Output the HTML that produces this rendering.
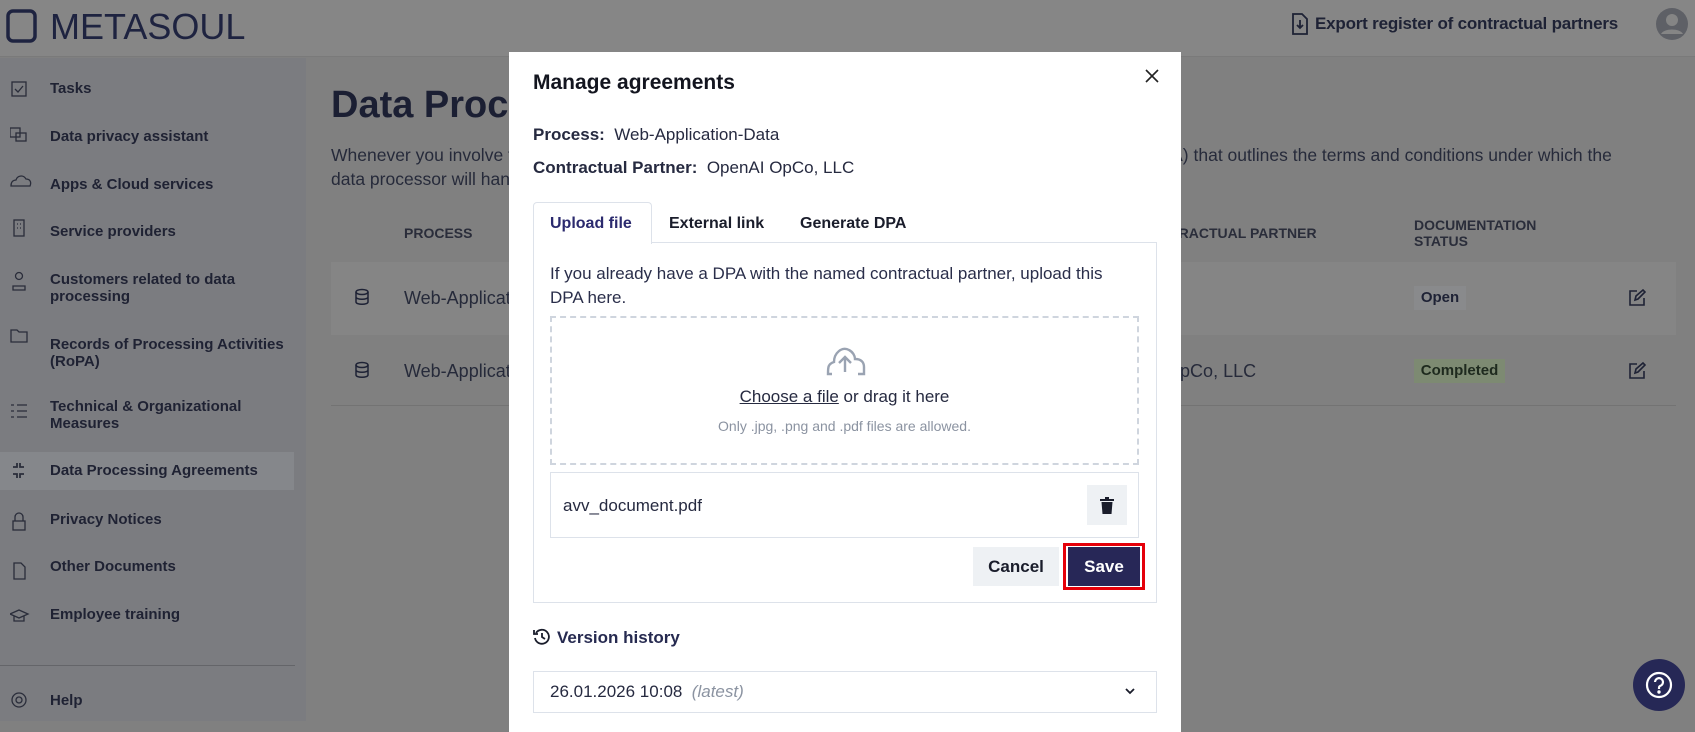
<!DOCTYPE html>
<html><head><meta charset="utf-8"><style>
*{box-sizing:border-box;margin:0;padding:0}
body{width:1695px;height:721px;overflow:hidden;position:relative;font-family:"Liberation Sans",sans-serif;background:#808080;color:#1e2235}
.abs{position:absolute}
.hdr{left:0;top:0;width:1695px;height:57px;background:#868686;border-bottom:1px solid #7a7a7a}
.side{left:0;top:58px;width:306px;height:663px;background:#7b7c80}
.nav{position:absolute;left:50px;font-size:15px;font-weight:bold;color:#1f2233;line-height:17px}
.m{position:absolute;font-family:"Liberation Sans",sans-serif}
.modal{left:509px;top:52px;width:672px;height:680px;background:#fff}
</style></head><body>
<div class="abs hdr"></div>
<svg class="abs" style="left:6px;top:9px" width="32" height="34"><rect x="2" y="2" width="27" height="30" rx="5" fill="none" stroke="#1e2340" stroke-width="3.5"/></svg>
<div class="abs" style="left:50px;top:6px;font-size:36px;color:#1e2340">METASOUL</div>
<svg class="abs" style="left:1291px;top:13px" width="18" height="22"><path d="M2 1h9l5 5v15H2z" fill="none" stroke="#1e2235" stroke-width="1.8"/><path d="M9 7v8M6 12l3 3 3-3" fill="none" stroke="#1e2235" stroke-width="1.8"/></svg>
<div class="abs" style="left:1315px;top:14px;font-size:17px;font-weight:bold;color:#1e2235;letter-spacing:-0.2px">Export register of contractual partners</div>
<svg class="abs" style="left:1654px;top:6px" width="36" height="36"><circle cx="18" cy="18" r="16" fill="#5e6066"/><circle cx="18" cy="14" r="6" fill="#858585"/><path d="M7 28c3-6 19-6 22 0" fill="#858585"/></svg>
<div class="abs side"></div>
<div class="abs" style="left:0;top:452px;width:294px;height:38px;background:#85878b"></div>
<div class="abs" style="left:0;top:665px;width:295px;height:1px;background:#646569"></div>
<svg class="abs" style="left:10px;top:78px" width="24" height="640" fill="none" stroke="#2a2d3a" stroke-width="1.3">
<rect x="2" y="4" width="14" height="14"/><path d="M5 11l3 3 5-6"/>
<rect x="0" y="50" width="10" height="9"/><rect x="6" y="55" width="10" height="8"/>
<path d="M1 108c0-5 3-6 5-6 1-4 7-6 10-1 3 0 6 2 4 7z"/>
<rect x="4" y="142" width="10" height="16"/><path d="M7 146h1M10 146h1M7 150h1M10 150h1"/>
<circle cx="9" cy="198" r="3.5"/><path d="M3 212v-4h12v4z"/>
<path d="M1 264v-12h6l2 2h8v10z"/>
<path d="M1 327h3M7 327h10M1 333h3M7 333h10M1 339h3M7 339h10"/>
<path d="M3 389h4v-4M14 389h-4v-4M3 396h4v4M14 396h-4v4" stroke-width="1.8"/>
<rect x="3" y="443" width="12" height="9"/><path d="M5 443v-4a4 4 0 0 1 8 0v4"/>
<path d="M4 485h7l4 4v12H4z"/>
<path d="M0 536l9-4 9 4-9 4zM4 538v5h10v-5"/>
<circle cx="9" cy="622" r="7"/><circle cx="9" cy="622" r="3"/>
</svg>
<div class="nav" style="top:80px">Tasks</div>
<div class="nav" style="top:128px">Data privacy assistant</div>
<div class="nav" style="top:176px">Apps &amp; Cloud services</div>
<div class="nav" style="top:223px">Service providers</div>
<div class="nav" style="top:271px">Customers related to data<br>processing</div>
<div class="nav" style="top:336px">Records of Processing Activities<br>(RoPA)</div>
<div class="nav" style="top:398px">Technical &amp; Organizational<br>Measures</div>
<div class="nav" style="top:462px">Data Processing Agreements</div>
<div class="nav" style="top:511px">Privacy Notices</div>
<div class="nav" style="top:558px">Other Documents</div>
<div class="nav" style="top:606px">Employee training</div>
<div class="nav" style="top:692px">Help</div>

<div class="abs" style="left:331px;top:84px;font-size:38px;font-weight:bold;color:#1b1f33">Data Processing Agreements</div>
<div class="abs" style="left:331px;top:143px;font-size:17.5px;line-height:24px;color:#262a3a;width:1300px">Whenever you involve third parties in processing personal data, you need a Data Processing Agreement (DPA) that outlines the terms and conditions under which the data processor will handle the personal data. This section supports you in managing these DPAs.</div>
<div class="abs" style="left:404px;top:225px;font-size:14px;font-weight:bold;color:#2a2d3a">PROCESS</div>
<div class="abs" style="left:1139px;top:225px;font-size:14px;font-weight:bold;color:#2a2d3a">CONTRACTUAL PARTNER</div>
<div class="abs" style="left:1414px;top:217px;font-size:14px;font-weight:bold;color:#2a2d3a;line-height:16px">DOCUMENTATION<br>STATUS</div>
<div class="abs" style="left:331px;top:262px;width:1345px;height:73px;background:#858585"></div>
<div class="abs" style="left:331px;top:405px;width:1345px;height:1px;background:#737373"></div>
<div class="abs" style="left:404px;top:288px;font-size:18px;color:#262a3a">Web-Application-Data</div>
<div class="abs" style="left:404px;top:361px;font-size:18px;color:#262a3a">Web-Application-Data</div>
<div class="abs" style="left:1100px;top:361px;font-size:18px;color:#262a3a">OpenAI OpCo, LLC</div>
<svg class="abs" style="left:354px;top:288px" width="16" height="90" fill="none" stroke="#1e2235" stroke-width="1.5"><ellipse cx="8" cy="4" rx="6" ry="2.5"/><path d="M2 4v10c0 3 12 3 12 0V4M2 9c0 3 12 3 12 0"/><g transform="translate(0,73)"><ellipse cx="8" cy="4" rx="6" ry="2.5"/><path d="M2 4v10c0 3 12 3 12 0V4M2 9c0 3 12 3 12 0"/></g></svg>
<div class="abs" style="left:1414px;top:286px;width:52px;height:24px;background:#898a8c;font-size:15px;font-weight:bold;line-height:24px;text-align:center;color:#1e2235">Open</div>
<div class="abs" style="left:1414px;top:359px;width:91px;height:24px;background:#7d8a72;font-size:15px;font-weight:bold;line-height:24px;text-align:center;color:#1e2a1e">Completed</div>
<svg class="abs" style="left:1628px;top:289px" width="18" height="90" fill="none" stroke="#1e2235" stroke-width="1.6"><path d="M9 2H2v14h14V9M7 11l1-4 7-6 2 2-7 7z"/><g transform="translate(0,73)"><path d="M9 2H2v14h14V9M7 11l1-4 7-6 2 2-7 7z"/></g></svg>
<div class="abs" style="left:1633px;top:659px;width:52px;height:52px;border-radius:50%;background:#262856"></div>
<svg class="abs" style="left:1644px;top:670px" width="30" height="30" fill="none" stroke="#fff" stroke-width="2.2"><circle cx="15" cy="15" r="12"/><path d="M11 12a4 4 0 1 1 5 4c-1 .5-1 1-1 3"/><circle cx="15" cy="22" r=".6" fill="#fff"/></svg>

<div class="abs modal"></div>
<div class="m" style="left:533px;top:71px;font-size:21px;font-weight:bold;color:#13151f">Manage agreements</div>
<svg class="abs" style="left:1145px;top:69px" width="14" height="14" stroke="#222" stroke-width="1.6"><path d="M1 1l12 12M13 1L1 13"/></svg>
<div class="m" style="left:533px;top:125px;font-size:17px;color:#262a40"><b>Process:</b>&nbsp; Web-Application-Data</div>
<div class="m" style="left:533px;top:158px;font-size:17px;color:#262a40"><b>Contractual Partner:</b>&nbsp; OpenAI OpCo, LLC</div>
<div class="abs" style="left:533px;top:242px;width:624px;height:361px;border:1px solid #dde2ea"></div>
<div class="abs" style="left:533px;top:202px;width:119px;height:42px;border:1px solid #dde2ea;border-bottom:none;border-radius:4px 4px 0 0;background:#fff"></div>
<div class="m" style="left:550px;top:215px;font-size:16px;font-weight:bold;color:#2b2a6e">Upload file</div>
<div class="m" style="left:669px;top:215px;font-size:16px;font-weight:bold;color:#1a1d2b">External link</div>
<div class="m" style="left:800px;top:215px;font-size:16px;font-weight:bold;color:#1a1d2b">Generate DPA</div>
<div class="m" style="left:550px;top:262px;font-size:17px;line-height:24px;color:#2a2e4a;width:580px">If you already have a DPA with the named contractual partner, upload this DPA here.</div>
<div class="abs" style="left:550px;top:316px;width:589px;height:149px;border:2px dashed #cfd5de"></div>
<svg class="abs" style="left:824px;top:344px" width="42" height="32" fill="none" stroke="#9aa3b2" stroke-width="2.4"><path d="M8 30H4c0-7 0-10 6-12 0-9 8-16 15-12 4 2 6 6 6 9 6 0 9 3 9 8v7H34"/><path d="M21 28V14M15 19l6-6 6 6"/></svg>
<div class="m" style="left:550px;top:387px;width:589px;text-align:center;font-size:17px;color:#262a40"><span style="text-decoration:underline">Choose a file</span> or drag it here</div>
<div class="m" style="left:550px;top:418px;width:589px;text-align:center;font-size:14px;color:#8b93a1">Only .jpg, .png and .pdf files are allowed.</div>
<div class="abs" style="left:550px;top:472px;width:589px;height:66px;border:1px solid #dde2ea"></div>
<div class="m" style="left:563px;top:496px;font-size:17px;color:#262a40">avv_document.pdf</div>
<div class="abs" style="left:1087px;top:485px;width:40px;height:40px;background:#eef1f4"></div>
<svg class="abs" style="left:1100px;top:497px" width="14" height="17" fill="#1a1d2b"><rect x="0" y="2" width="14" height="2"/><rect x="5" y="0" width="4" height="2"/><path d="M1.5 5h11l-1 12h-9z"/></svg>
<div class="abs" style="left:973px;top:547px;width:86px;height:39px;background:#eef1f4;font-size:17px;font-weight:bold;line-height:39px;text-align:center;color:#1a1d2b">Cancel</div>
<div class="abs" style="left:1063px;top:543px;width:82px;height:47px;border:3px solid #e5000a"></div>
<div class="abs" style="left:1068px;top:547px;width:72px;height:39px;background:#272757;font-size:17px;font-weight:bold;line-height:39px;text-align:center;color:#fff">Save</div>
<svg class="abs" style="left:533px;top:628px" width="18" height="18" fill="none" stroke="#1a1d2b" stroke-width="1.8"><path d="M3 5a7 7 0 1 1-1 5"/><path d="M1 2v4h4"/><path d="M9 5v4l3 2"/></svg>
<div class="m" style="left:557px;top:628px;font-size:17px;font-weight:bold;color:#262a50">Version history</div>
<div class="abs" style="left:533px;top:671px;width:624px;height:42px;border:1px solid #dde2ea"></div>
<div class="m" style="left:550px;top:682px;font-size:17px;color:#262a40">26.01.2026 10:08 &nbsp;<i style="color:#8b93a1">(latest)</i></div>
<svg class="abs" style="left:1124px;top:687px" width="12" height="8" fill="none" stroke="#1a1d2b" stroke-width="1.8"><path d="M2 2l4 4 4-4"/></svg>
</body></html>
